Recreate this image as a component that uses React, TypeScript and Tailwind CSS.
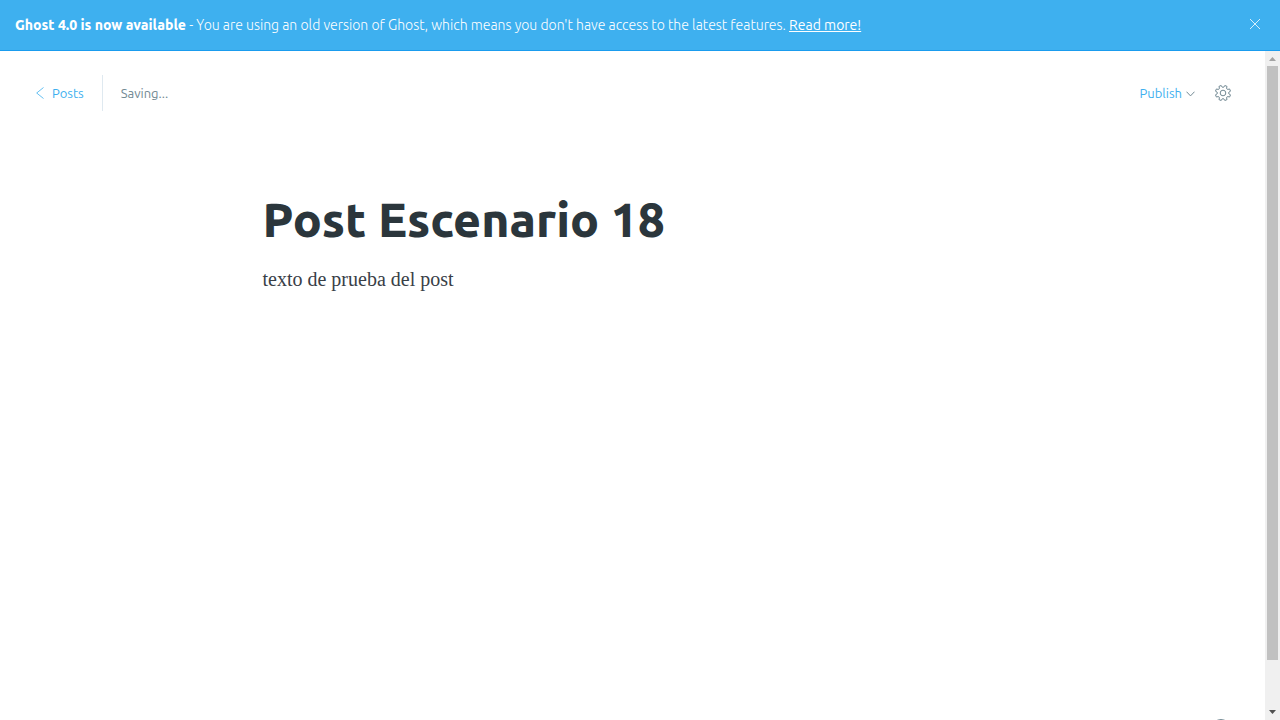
import { useState } from "react";

const TEETH = 8;

function cogPath() {
  const points: string[] = [];
  const at = (radius: number, degrees: number) => {
    const a = (degrees * Math.PI) / 180;
    return `${(12 + radius * Math.sin(a)).toFixed(2)} ${(12 - radius * Math.cos(a)).toFixed(2)}`;
  };
  for (let i = 0; i < TEETH; i++) {
    const c = i * 45 + 22.5;
    points.push(`${i ? "L" : "M"}${at(9, c - 14)}`, `L${at(11.6, c - 9)}`, `L${at(11.6, c + 9)}`, `L${at(9, c + 14)}`);
    points.push(`Q${at(7.8, c + 22.5)} ${at(9, c + 31)}`);
  }
  return points.join("") + "Z";
}

function CogIcon() {
  return (
    <svg viewBox="0 0 24 24" className="size-4" fill="none" stroke="currentColor" strokeWidth="1.5" strokeLinejoin="round" aria-hidden="true">
      <path d={cogPath()} />
      <circle cx="12" cy="12" r="4.2" />
    </svg>
  );
}

export default function App() {
  const [showNotice, setShowNotice] = useState(true);
  const [title, setTitle] = useState("Post Escenario 18");

  return (
    <div className="flex h-screen flex-col overflow-hidden bg-white font-['Ubuntu','Noto_Sans',sans-serif]">
      {showNotice && (
        <aside className="flex shrink-0 items-center justify-between border-b border-[#1a9cee] bg-[#3eb0ef] py-[15px] pr-[19px] pl-[15px] text-sm leading-5 text-white">
          <p className="whitespace-nowrap font-light">
            <b className="font-extrabold">Ghost 4.0 is now available</b> - You are using an old version of Ghost, which means you don't have access to the latest features.{" "}
            <a href="#read-more" className="font-normal underline">Read more!</a>
          </p>
          <button type="button" aria-label="Close" onClick={() => setShowNotice(false)}>
            <svg viewBox="0 0 12 12" className="-mt-0.5 size-3" fill="none" stroke="currentColor" strokeWidth="0.8" aria-hidden="true">
              <path d="M1 1l10 10M11 1L1 11" />
            </svg>
          </button>
        </aside>
      )}

      <div className="flex min-h-0 flex-1">
        <main className="relative flex min-w-0 flex-1 flex-col overflow-hidden">
          <header className="flex items-center justify-between pt-6 pr-[34px] pl-9 text-[13px] leading-5">
            <div className="flex items-center">
              <a href="#posts" className="flex h-9 items-center gap-2 border-r border-[#dfe9f0] pr-[18px] text-[#3eb0ef]">
                <svg viewBox="0 0 8 12" className="h-3 w-2" fill="none" stroke="currentColor" strokeWidth="0.8" aria-hidden="true">
                  <path d="M7.5 .5L.7 6l6.8 5.5" />
                </svg>
                Posts
              </a>
              <span className="pl-[18px] text-[#738a94]">Saving...</span>
            </div>
            <div className="flex items-center gap-5">
              <button type="button" className="flex items-center gap-1 text-[#3eb0ef]">
                Publish
                <svg viewBox="0 0 9 6" className="mt-0.5 h-1.5 w-[9px] text-[#738a94]" fill="none" stroke="currentColor" aria-hidden="true">
                  <path d="M.5 .7l4 4.2 4-4.2" />
                </svg>
              </button>
              <button type="button" aria-label="Settings" className="text-[#738a94]">
                <CogIcon />
              </button>
            </div>
          </header>

          <article className="mx-auto flex w-full max-w-[740px] flex-col pt-20">
            <input
              aria-label="Post title"
              value={title}
              onChange={(e) => setTitle(e.target.value)}
              className="h-14 w-full text-5xl font-extrabold text-[#2b363c] outline-none"
            />
            <p className="pt-4 font-['Liberation_Serif',serif] text-xl leading-8 text-[#394047]">texto de prueba del post</p>
          </article>

          <button type="button" aria-label="Help" className="absolute right-[35px] -bottom-[17px] text-[#738a94]">
            <svg viewBox="0 0 18 18" className="size-[18px]" fill="none" stroke="currentColor" aria-hidden="true">
              <circle cx="9" cy="9" r="8.5" />
            </svg>
          </button>
        </main>

        <div className="flex w-[15px] shrink-0 flex-col items-center bg-[#f0f0f0]" aria-hidden="true">
          <svg viewBox="0 0 15 15" className="size-[15px] shrink-0 fill-[#a3a3a3]">
            <path d="M4 10h7L7.5 6z" />
          </svg>
          <div className="w-[11px] grow-[594] basis-0 bg-[#c1c1c1]" />
          <div className="grow-[45] basis-0" />
          <svg viewBox="0 0 15 15" className="size-[15px] shrink-0 fill-[#505050]">
            <path d="M4 5h7L7.5 9z" />
          </svg>
        </div>
      </div>
    </div>
  );
}
